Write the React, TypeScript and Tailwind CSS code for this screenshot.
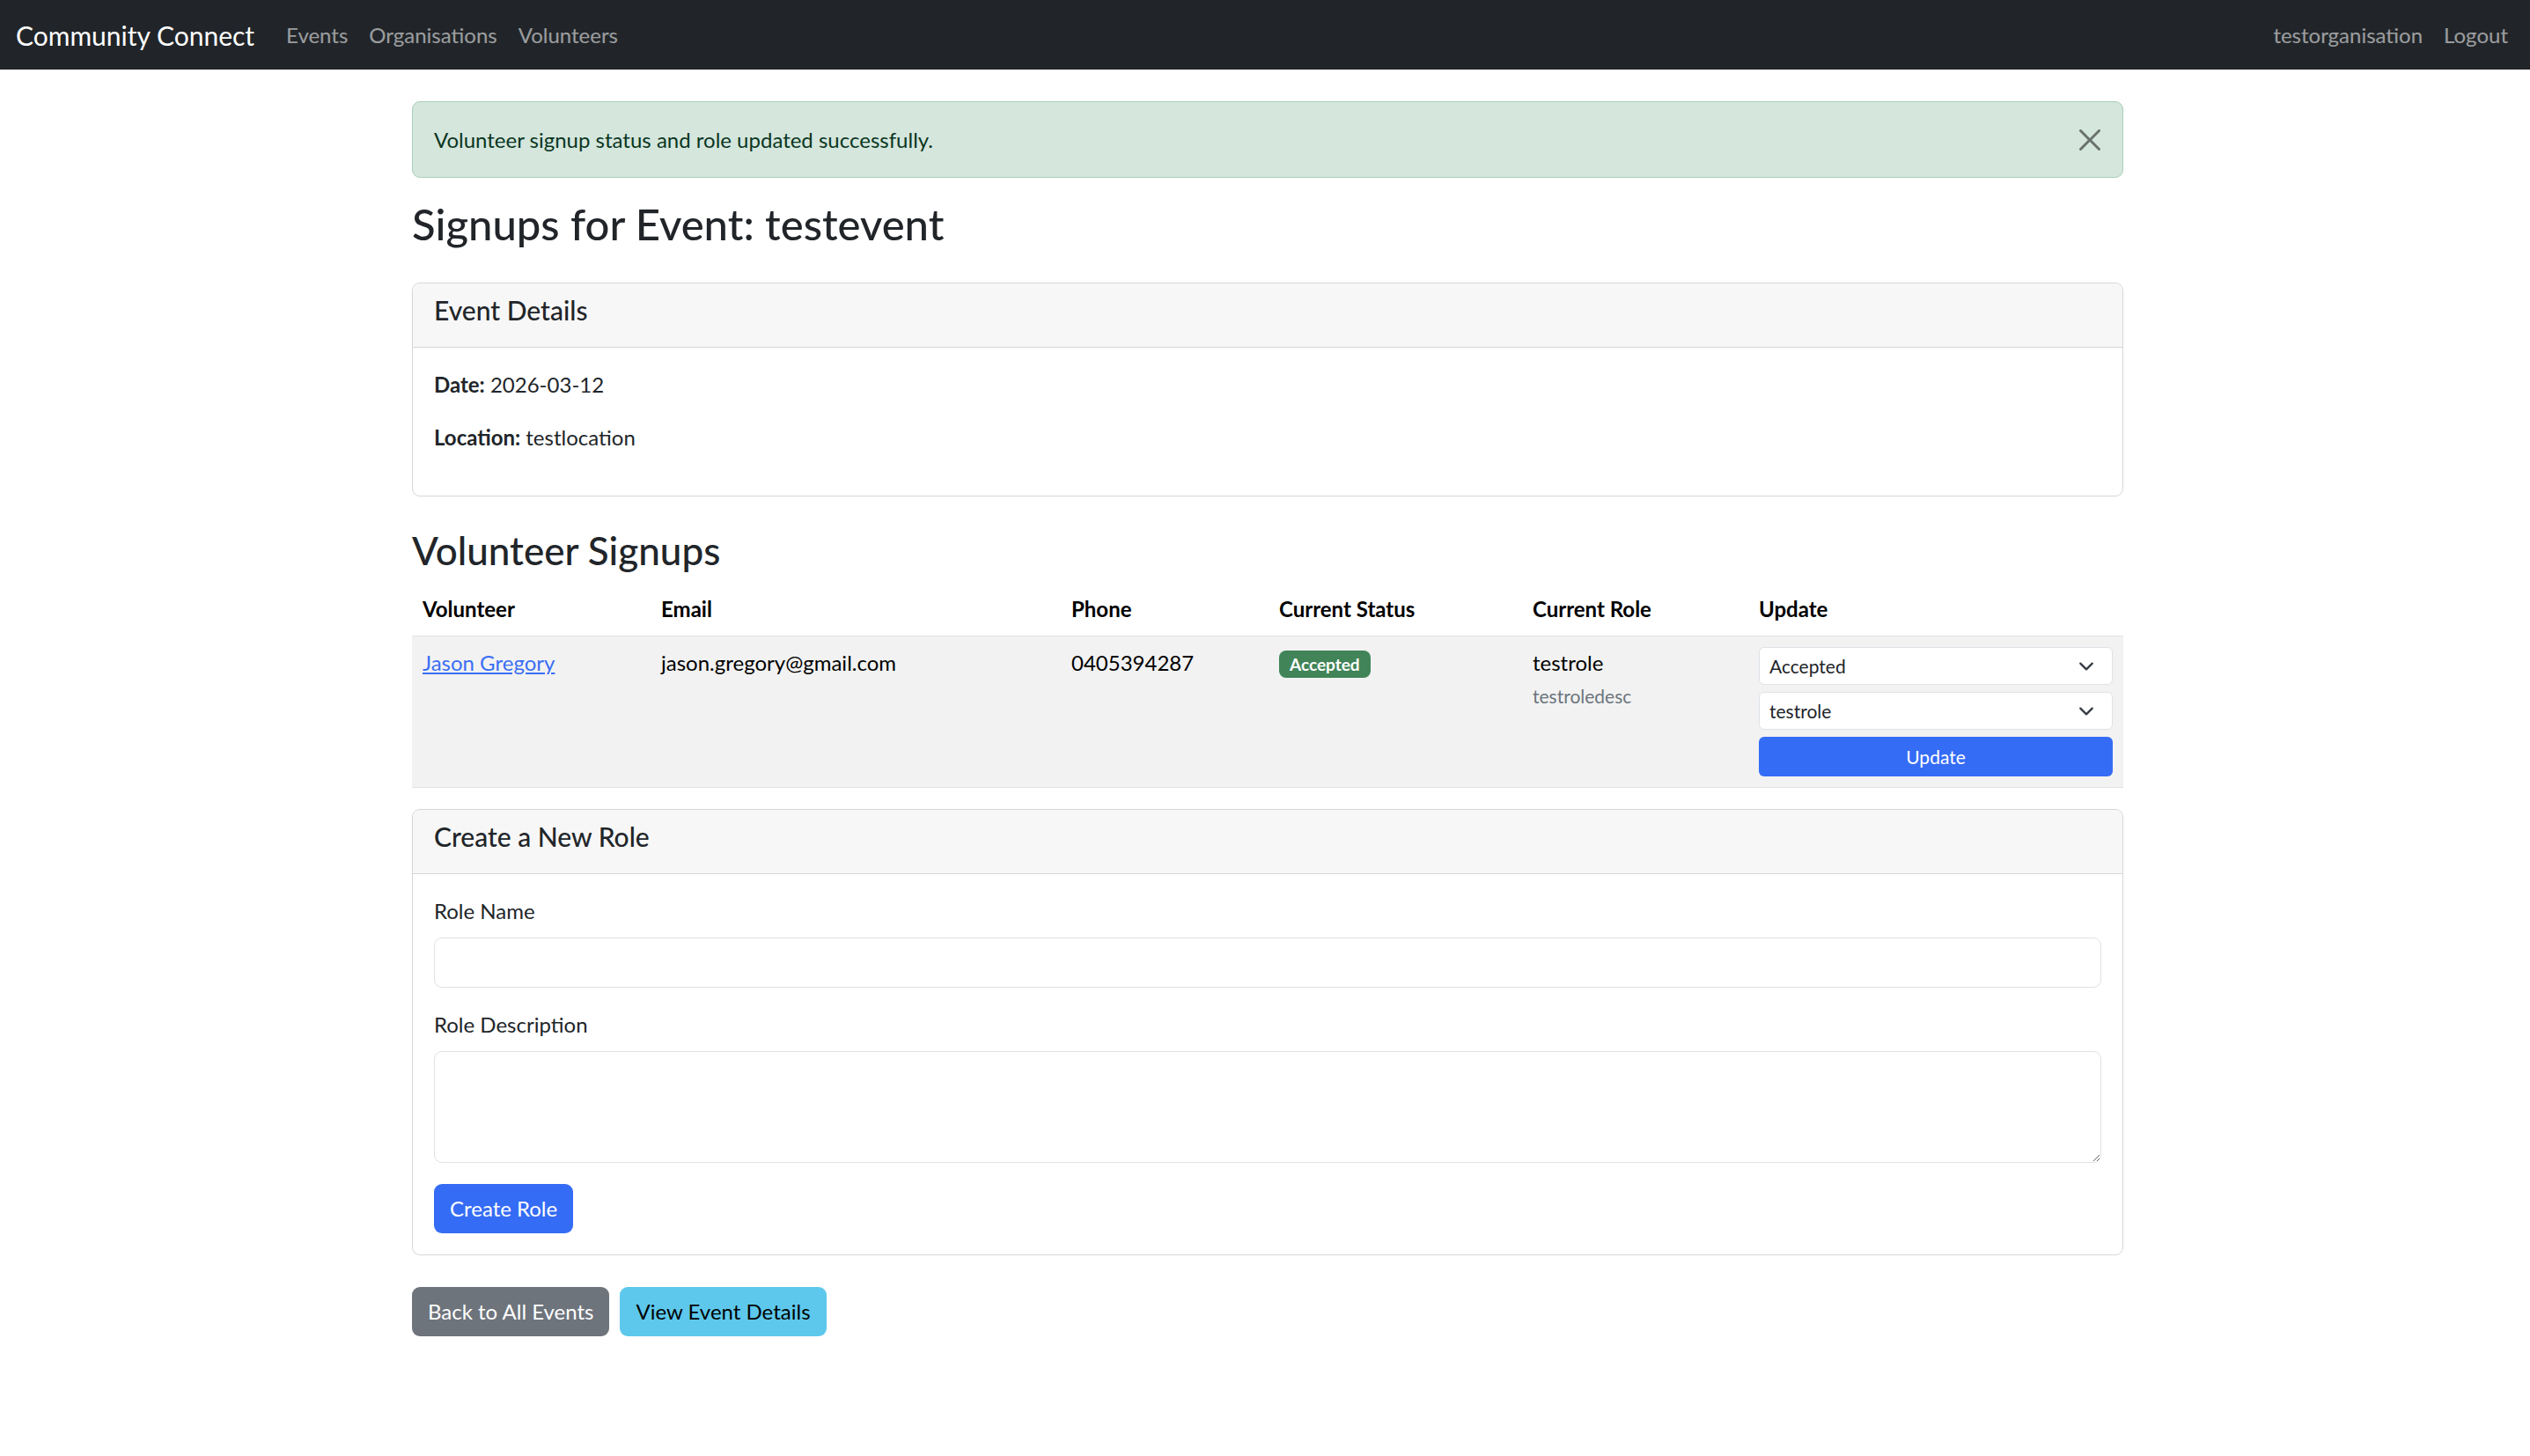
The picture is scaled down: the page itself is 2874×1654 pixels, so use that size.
import React from 'react';

const navLinks = ['Events', 'Organisations', 'Volunteers'];

const CloseIcon = () => (
  <svg width="24" height="24" viewBox="0 0 16 16" className="opacity-50">
    <path
      fill="#000"
      d="M.293.293a1 1 0 0 1 1.414 0L8 6.586 14.293.293a1 1 0 1 1 1.414 1.414L9.414 8l6.293 6.293a1 1 0 0 1-1.414 1.414L8 9.414l-6.293 6.293a1 1 0 0 1-1.414-1.414L6.586 8 .293 1.707a1 1 0 0 1 0-1.414z"
    />
  </svg>
);

const Chevron = () => (
  <svg
    width="18"
    height="18"
    viewBox="0 0 16 16"
    className="pointer-events-none absolute right-[21px] top-1/2 -translate-y-1/2"
  >
    <path fill="none" stroke="#343a40" strokeWidth="2" strokeLinecap="round" strokeLinejoin="round" d="m2 5 6 6 6-6" />
  </svg>
);

const SmallSelect: React.FC<{ value: string; options: string[] }> = ({ value, options }) => (
  <div className="relative">
    <select
      defaultValue={value}
      className="block h-[43px] w-full appearance-none rounded-[6px] border border-[#dee2e6] bg-white pl-[11px] pr-[48px] text-[21px] text-[#212529] outline-none"
    >
      {options.map((o) => (
        <option key={o}>{o}</option>
      ))}
    </select>
    <Chevron />
  </div>
);

const Card: React.FC<{ title: string; children: React.ReactNode }> = ({ title, children }) => (
  <div className="rounded-[9px] border border-[#d6d6d6] bg-white">
    <div className="rounded-t-[9px] border-b border-[#d6d6d6] bg-[#f7f7f7] px-[24px] py-[12px]">
      <h5 className="mb-[12px] text-[30px] font-medium leading-[36px]">{title}</h5>
    </div>
    <div className="p-[24px]">{children}</div>
  </div>
);

const App: React.FC = () => {
  const headers = ['Volunteer', 'Email', 'Phone', 'Current Status', 'Current Role', 'Update'];

  return (
    <div className="min-h-screen bg-white font-['Lato',sans-serif] text-[24px] leading-[36px] text-[#212529]">
      <nav className="flex h-[79px] items-center bg-[#212529] pl-[18px] pr-[13px]">
        <a href="#" className="mr-[24px] text-[30px] text-white">
          Community Connect
        </a>
        <ul className="flex">
          {navLinks.map((l) => (
            <li key={l}>
              <a href="#" className="px-[12px] text-white/55">
                {l}
              </a>
            </li>
          ))}
        </ul>
        <ul className="ml-auto flex">
          <li>
            <a href="#" className="px-[12px] text-white/55">
              testorganisation
            </a>
          </li>
          <li>
            <a href="#" className="px-[12px] text-white/55">
              Logout
            </a>
          </li>
        </ul>
      </nav>

      <main className="ml-[468px] w-[1944px] pt-[36px]">
        <div className="mb-[24px] flex h-[87px] items-center justify-between rounded-[9px] border border-[#a9d0bc] bg-[#d5e6dd] pl-[24px] pr-[25px] text-[#0a3622]">
          <span>Volunteer signup status and role updated successfully.</span>
          <button type="button" className="flex items-center">
            <CloseIcon />
          </button>
        </div>

        <h2 className="mb-[37px] text-[49px] font-medium leading-[57.6px]">Signups for Event: testevent</h2>

        <Card title="Event Details">
          <p className="mb-[24px]">
            <strong className="font-bold">Date:</strong> 2026-03-12
          </p>
          <p className="mb-[24px]">
            <strong className="font-bold">Location:</strong> testlocation
          </p>
        </Card>

        <h3 className="mb-[12px] mt-[36px] text-[44px] font-medium leading-[50.4px]">Volunteer Signups</h3>

        <table className="mb-[24px] w-full table-fixed border-collapse text-left">
          <colgroup>
            <col className="w-[271px]" />
            <col className="w-[466px]" />
            <col className="w-[236px]" />
            <col className="w-[288px]" />
            <col className="w-[257px]" />
            <col className="w-[426px]" />
          </colgroup>
          <thead>
            <tr className="border-b border-[#dee2e6]">
              {headers.map((h) => (
                <th key={h} className="p-[12px] font-bold text-black">
                  {h}
                </th>
              ))}
            </tr>
          </thead>
          <tbody>
            <tr className="border-b border-[#dee2e6] bg-[#f2f2f2] align-top">
              <td className="p-[12px]">
                <a href="#" className="text-[#3a6ef5] underline">
                  Jason Gregory
                </a>
              </td>
              <td className="p-[12px] text-black">jason.gregory@gmail.com</td>
              <td className="p-[12px] text-black">0405394287</td>
              <td className="p-[12px]">
                <span className="mt-[4px] inline-block rounded-[8px] bg-[#408458] px-[12px] py-[6px] text-[19px] font-bold leading-[19px] text-white">
                  Accepted
                </span>
              </td>
              <td className="p-[12px]">
                <div className="text-black">testrole</div>
                <small className="mt-[4px] block text-[21px] leading-[31px] text-[#6c757d]">testroledesc</small>
              </td>
              <td className="p-[12px]">
                <div className="flex flex-col gap-[8px]">
                  <SmallSelect value="Accepted" options={['Pending', 'Accepted', 'Rejected']} />
                  <SmallSelect value="testrole" options={['testrole']} />
                  <button
                    type="button"
                    className="h-[45px] w-full rounded-[6px] bg-[#356cf5] text-[21px] text-white"
                  >
                    Update
                  </button>
                </div>
              </td>
            </tr>
          </tbody>
        </table>

        <Card title="Create a New Role">
          <label className="mb-[12px] block">Role Name</label>
          <input
            type="text"
            className="mb-[24px] block h-[57px] w-full rounded-[9px] border border-[#dee2e6] px-[18px] outline-none"
          />
          <label className="mb-[12px] block">Role Description</label>
          <textarea className="mb-[24px] block h-[127px] w-full rounded-[9px] border border-[#dee2e6] px-[18px] py-[9px] outline-none" />
          <button type="button" className="h-[56px] rounded-[9px] bg-[#356cf5] px-[18px] text-white">
            Create Role
          </button>
        </Card>

        <div className="mt-[36px] flex gap-[12px]">
          <a href="#" className="flex h-[56px] items-center rounded-[9px] bg-[#6e747c] px-[18px] text-white">
            Back to All Events
          </a>
          <a href="#" className="flex h-[56px] items-center rounded-[9px] bg-[#5dc8ec] px-[18px] text-black">
            View Event Details
          </a>
        </div>
      </main>
    </div>
  );
};

export default App;
